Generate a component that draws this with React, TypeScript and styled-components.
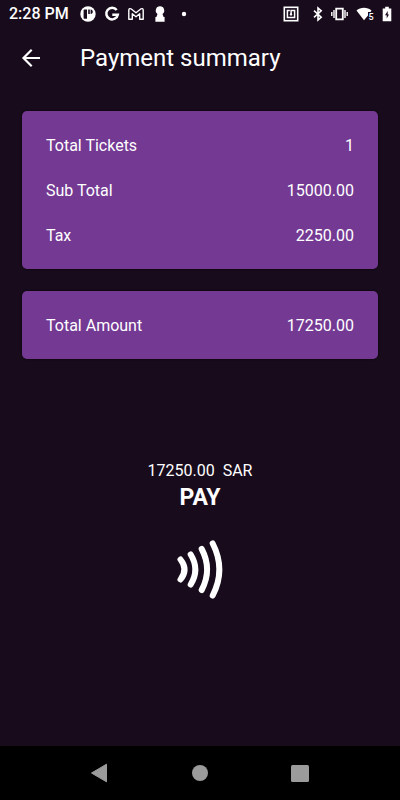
import React from 'react';
import styled, { createGlobalStyle } from 'styled-components';

const GlobalStyle = createGlobalStyle`
  *, *::before, *::after { box-sizing: border-box; }
  body {
    margin: 0;
    background: #180b1c;
    color: #ffffff;
    font-family: Roboto, 'Liberation Sans', sans-serif;
  }
`;

const Screen = styled.div`
  display: flex;
  flex-direction: column;
  min-height: 100vh;
`;

const StatusBar = styled.div`
  display: flex;
  align-items: center;
  justify-content: space-between;
  height: 28px;
  padding: 0 8px 0 9px;
`;

const StatusGroup = styled.div`
  display: flex;
  align-items: center;
  gap: 8px;
`;

const Clock = styled.time`
  margin-right: 3px;
  font-size: 16px;
  line-height: 20px;
  font-weight: 500;
`;

const Glyph = styled.svg`
  display: block;
  flex: none;
  overflow: visible;
`;

const NfcGlyph = styled(Glyph)`
  margin-right: 6px;
`;

const Header = styled.header`
  display: flex;
  align-items: center;
  gap: 34px;
  height: 59px;
  padding: 0 16px;
`;

const BackButton = styled.button`
  display: flex;
  align-items: center;
  justify-content: center;
  width: 30px;
  height: 32px;
  padding: 0;
  border: 0;
  background: none;
  color: inherit;
  cursor: pointer;
`;

const Title = styled.h1`
  margin: 0;
  font-size: 24px;
  line-height: 32px;
  font-weight: 400;
`;

const Content = styled.main`
  display: flex;
  flex: 1;
  flex-direction: column;
  gap: 22px;
  padding: 24px 22px;
`;

const Card = styled.dl`
  display: flex;
  flex-direction: column;
  gap: 1px;
  margin: 0;
  padding: 13px 24px 11px;
  border-radius: 5px;
  background: #733993;
  box-shadow: 0 0 2px #000000;
`;

const Row = styled.div`
  display: flex;
  align-items: center;
  justify-content: space-between;
  min-height: 44px;
  font-size: 16px;
  line-height: 20px;
`;

const Label = styled.dt`
  margin: 0;
`;

const Value = styled.dd`
  margin: 0;
`;

const Payment = styled.section`
  display: flex;
  flex-direction: column;
  align-items: center;
  padding-top: 79px;
`;

const Amount = styled.p`
  margin: 0;
  font-size: 16px;
  line-height: 22px;
  white-space: pre;
`;

const PayButton = styled.button`
  display: flex;
  flex-direction: column;
  align-items: center;
  gap: 26px;
  padding: 0;
  border: 0;
  background: none;
  color: inherit;
  font: inherit;
  font-size: 23px;
  line-height: 32px;
  font-weight: 700;
  cursor: pointer;
`;

const NavBar = styled.nav`
  display: flex;
  align-items: center;
  justify-content: center;
  gap: 76px;
  height: 54px;
  background: #000000;
`;

const NavButton = styled.button`
  display: flex;
  align-items: center;
  justify-content: center;
  width: 24px;
  height: 24px;
  padding: 0;
  border: 0;
  background: none;
  color: #9b9b9b;
  cursor: pointer;
`;

const summary = [
  { label: 'Total Tickets', value: '1' },
  { label: 'Sub Total', value: '15000.00' },
  { label: 'Tax', value: '2250.00' },
];

const total = [{ label: 'Total Amount', value: '17250.00' }];

function SummaryCard({ rows }: { rows: { label: string; value: string }[] }) {
  return (
    <Card>
      {rows.map((row) => (
        <Row key={row.label}>
          <Label>{row.label}</Label>
          <Value>{row.value}</Value>
        </Row>
      ))}
    </Card>
  );
}

function NotificationIcons() {
  return (
    <>
      <Glyph width="16" height="16" viewBox="0 0 16 16" aria-hidden="true">
        <circle cx="8" cy="8" r="7.7" fill="#fff" />
        <path d="M3.6 4.200Q3.600 3.500 4.300 3.500H7V12.800H4.400Q3.600 12.800 3.600 12zM8.200 3.500h1.600v4.400H8.200zM10.600 3.500c1.500.2 2.200 1.100 2.200 2.200s-.7 2-2.200 2.200z" fill="#180b1c" />
      </Glyph>
      <Glyph width="16" height="16" viewBox="0 0 16 16" aria-hidden="true">
        <path d="M12.7 4A5.8 5.8 0 1 0 13.800 8.700H8.3" fill="none" stroke="#fff" strokeWidth="2.5" />
      </Glyph>
      <Glyph width="16" height="16" viewBox="0 0 16 16" aria-hidden="true">
        <path d="M.8 13.3V4.1c0-1.5 1.5-1.9 2.5-1.1L8 6.7 12.7 3c1-.8 2.5-.4 2.5 1.1v9.2h-3.5V7.8L8 10.7 4.3 7.8v5.5z" fill="none" stroke="#fff" strokeWidth="1.4" strokeLinejoin="round" />
      </Glyph>
      <Glyph width="16" height="16" viewBox="0 0 16 16" aria-hidden="true">
        <path d="M8 .3a4.2 4.2 0 0 1 2.5 7.6l1.1 3.2h1V15.7H3.4v-4.6h1l1.1-3.2A4.2 4.2 0 0 1 8 .3z" fill="#fff" />
      </Glyph>
      <Glyph width="16" height="16" viewBox="0 0 16 16" aria-hidden="true">
        <circle cx="8" cy="8" r="2.2" fill="#fff" />
      </Glyph>
    </>
  );
}

function SystemIcons() {
  return (
    <>
      <NfcGlyph width="16" height="16" viewBox="0 0 16 16" aria-hidden="true">
        <rect x="1.3" y="1.3" width="13.4" height="13.4" fill="none" stroke="#fff" strokeWidth="1.6" />
        <path d="M6.8 4.4H4.4v7.2h7.2V4.4H8.1v4" fill="none" stroke="#fff" strokeWidth="1.5" />
        <circle cx="8" cy="8.4" r="1.2" fill="#fff" />
      </NfcGlyph>
      <Glyph width="10" height="16" viewBox="0 0 10 16" aria-hidden="true">
        <path d="M1 4.600 8.200 11.200 5 14V2l3.200 2.800L1 11.400" fill="none" stroke="#fff" strokeWidth="1.6" />
      </Glyph>
      <Glyph width="17" height="14" viewBox="0 0 17 14" aria-hidden="true">
        <path d="M5.2 1.7h6.6v10.6H5.2z" fill="none" stroke="#fff" strokeWidth="1.8" />
        <path d="M3 3v8M14 3v8M.8 5v4M16.2 5v4" stroke="#fff" strokeWidth="1.4" />
      </Glyph>
      <Glyph width="18" height="14" viewBox="0 0 18 14" aria-hidden="true">
        <path d="M.5 3.500C4.500-.2 11.500-.2 15.500 3.500L14.500 5H12v3.600L8 13.200z" fill="#fff" />
        <text x="12.500" y="12.500" fill="#fff" fontSize="9" fontWeight="500">5</text>
      </Glyph>
      <Glyph width="10" height="16" viewBox="0 0 10 16" aria-hidden="true">
        <path d="M3.200 .8h3.600v1.600H9.300V15.300H.7V2.400h2.500z" fill="#fff" />
        <path d="M5.700 5 3 9.300h1.700v3.200L7 8.400H5.700z" fill="#180b1c" />
      </Glyph>
    </>
  );
}

export default function App() {
  return (
    <>
      <GlobalStyle />
      <Screen>
        <StatusBar>
          <StatusGroup>
            <Clock>2:28 PM</Clock>
            <NotificationIcons />
          </StatusGroup>
          <StatusGroup>
            <SystemIcons />
          </StatusGroup>
        </StatusBar>
        <Header>
          <BackButton type="button" aria-label="Back">
            <Glyph width="18" height="18" viewBox="0 0 18 18" aria-hidden="true">
              <path d="M18 9H1.500M9.700 .8 1.500 9l8.200 8.200" fill="none" stroke="currentColor" strokeWidth="2.200" />
            </Glyph>
          </BackButton>
          <Title>Payment summary</Title>
        </Header>
        <Content>
          <SummaryCard rows={summary} />
          <SummaryCard rows={total} />
          <Payment>
            <Amount>{'17250.00  SAR'}</Amount>
            <PayButton type="button">
              PAY
              <Glyph width="46" height="60" viewBox="0 0 46 60" aria-hidden="true">
                <path
                  d="M3.500 19.500Q11.500 29.500 3.500 39.500M13.700 14.500Q23 29.500 13.700 44.500M24.700 9Q35.500 29.500 24.700 50M35.700 3.500Q49 29.500 35.700 55.500"
                  fill="none"
                  stroke="currentColor"
                  strokeWidth="6"
                  strokeLinecap="round"
                />
              </Glyph>
            </PayButton>
          </Payment>
        </Content>
        <NavBar aria-label="System navigation">
          <NavButton type="button" aria-label="Back">
            <Glyph width="18" height="20" viewBox="0 0 18 20" aria-hidden="true">
              <path d="M15.500 1.200v17.600L.5 10z" fill="currentColor" stroke="currentColor" strokeWidth="1" strokeLinejoin="round" />
            </Glyph>
          </NavButton>
          <NavButton type="button" aria-label="Home">
            <Glyph width="16" height="16" viewBox="0 0 16 16" aria-hidden="true">
              <circle cx="8" cy="8" r="8" fill="currentColor" />
            </Glyph>
          </NavButton>
          <NavButton type="button" aria-label="Recent apps">
            <Glyph width="18" height="17" viewBox="0 0 18 17" aria-hidden="true">
              <rect width="18" height="17" rx="1.500" fill="currentColor" />
            </Glyph>
          </NavButton>
        </NavBar>
      </Screen>
    </>
  );
}
